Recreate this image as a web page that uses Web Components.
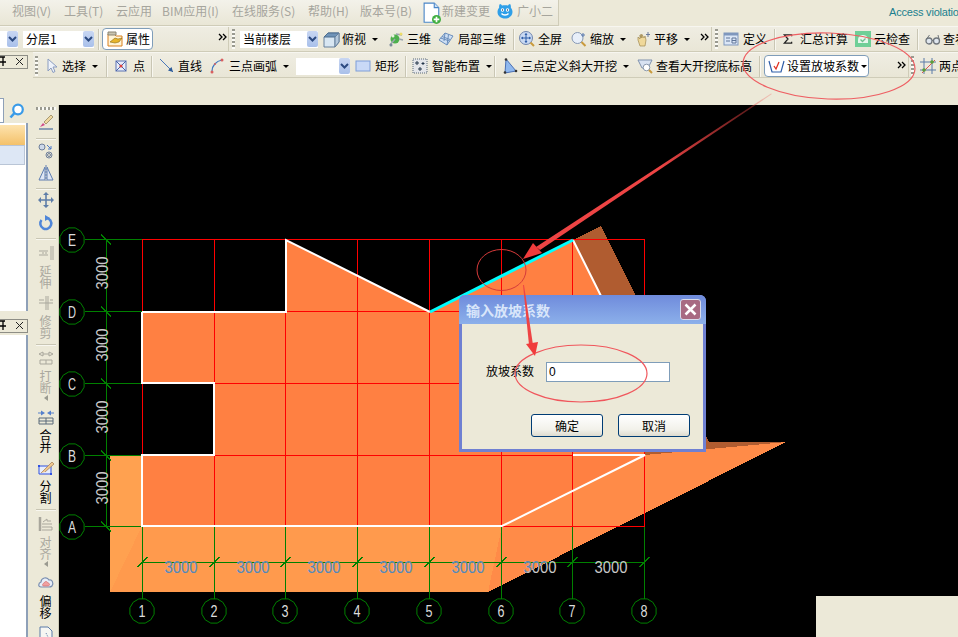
<!DOCTYPE html>
<html>
<head>
<meta charset="utf-8">
<style>
  html, body { margin: 0; height: 637px; overflow: hidden; background: #ece9d8; }
  body { font: 12px "Noto Sans CJK SC", "Liberation Sans", sans-serif; color: #000; }
</style>
</head>
<body>
<cad-app></cad-app>

<script>
const ICONS = {
  doc: '<path d="M2 1h9l4 4v13H2z" fill="#fff" stroke="#4a86c8"/><path d="M11 1v4h4" fill="#cfe2f6" stroke="#4a86c8"/><circle cx="13" cy="15.500" r="4" fill="#3fae3f"/><path d="M13 13v5M10.500 15.500h5" stroke="#fff" stroke-width="1.500"/>',
  mascot: '<path d="M3 1c1 0 1.500 1 2 1.500C6 2 10 2 11 2.500 11.500 2 12 1 13 1c1 1 1 3 .8 3.500C15 6 15.500 7.500 15.500 9c0 4-3.500 6.500-7.500 6.500S.5 13 .5 9C.5 7.500 1 6 2.200 4.500 2 4 2 2 3 1z" fill="#2f9fe8"/><circle cx="5.500" cy="7" r="1.700" fill="#fff"/><circle cx="10.500" cy="7" r="1.700" fill="#fff"/><circle cx="5.500" cy="7" r=".7" fill="#0a3a66"/><circle cx="10.500" cy="7" r=".7" fill="#0a3a66"/><path d="M4.500 10.500c1.500 2 5.500 2 7 0" fill="none" stroke="#fff" stroke-width="1.300"/>',
  prop: '<path d="M1 3h6l2 2h6v10H1z" fill="#fff3d6" stroke="#d9801e"/><path d="M1 1h8v3H1z" fill="#c9c4b0" stroke="#8a8472"/><path d="M3 11l5-4 3 1 4-1-3 4-4 1z" fill="#e7b52c" stroke="#8a6a10" stroke-width=".6"/>',
  cube: '<path d="M1 6l4-4h11v9l-4 5H1z" fill="#d8e6f2" stroke="#66809c"/><path d="M1 6l4-4h11l-4 4z" fill="#6f93b8" stroke="#4d6d8e"/><path d="M12 6v10" stroke="#66809c"/><path d="M12 6l4-4v9l-4 5z" fill="#b4c8dc" stroke="#66809c"/>',
  view3d: '<circle cx="7" cy="8" r="4.500" fill="#4db04d"/><path d="M2 14l5-6M8 3l6 1M11 8l4 1" stroke="#9aa5ae" stroke-width="1.500"/><circle cx="5" cy="5" r="1.500" fill="#e9f4e0"/><circle cx="13" cy="3" r="1.500" fill="#eedd66"/><circle cx="3" cy="14" r="1.500" fill="#7a8a9a"/>',
  local3d: '<path d="M1 9l6-7 8 3-6 9z" fill="#cfe0f4" stroke="#6a8ebc"/><path d="M4 5.500l8 3M7 2l-1 8M10.500 3.500L9 14M2.500 7l9 3" stroke="#6a8ebc" fill="none"/>',
  fit: '<circle cx="7" cy="7" r="6.500" fill="#c9d9f2" stroke="#7186ad"/><path d="M7 2.500v9M2.500 7h9" stroke="#2f5ea8"/><path d="M7 2L5.500 4h3zM7 12l-1.500-2h3zM2 7l2-1.500v3zM12 7l-2-1.500v3z" fill="#2f5ea8"/><path d="M11.500 11.500l3.500 3.500" stroke="#c99a3c" stroke-width="2"/>',
  zoom: '<circle cx="6.500" cy="7" r="5.500" fill="#e8eff9" stroke="#8698b4"/><path d="M10.500 11l4 4" stroke="#c99a3c" stroke-width="2"/><path d="M12 2v4M10 4h4" stroke="#5a7ab0"/>',
  pan: '<path d="M3 9V6l2 2V4l1 3V3l1 4V3.500L9 7l1-2 1 4-1 6H5z" fill="#efd89a" stroke="#a08a50" stroke-width=".7"/><path d="M13 1v5M11 3.500h4" stroke="#6a7a9a"/>',
  define: '<rect x="1" y="2" width="14" height="12" fill="#dbe6f6" stroke="#7f97bd"/><rect x="1" y="2" width="14" height="2.500" fill="#7f97bd"/><path d="M3 7h4M3 10h4M9 7h4v5H9zM9 9.500h4" stroke="#5f7598" fill="none"/>',
  sum: '<path d="M9 2.500V1H1l4 4.500L1 10h8V8.500" fill="none" stroke="#222" stroke-width="1.400"/>',
  cloud: '<rect x="0" y="0" width="16" height="16" fill="#6fcf97"/><path d="M3 9c0-4 3-5 5-5s5 1 5 5v3H3z" fill="#e6f6ec"/><path d="M5.500 8.500l2 2 3-3" fill="none" stroke="#6fbf8f" stroke-width="1.300"/>',
  glasses: '<circle cx="4" cy="10" r="3" fill="#dfe6ee" stroke="#70767c" stroke-width="1.300"/><circle cx="11.500" cy="10" r="3" fill="#dfe6ee" stroke="#70767c" stroke-width="1.300"/><path d="M7 9.500h1.500M1.500 8l3-4M14 8l-1-4" stroke="#70767c"/>',
  cursor: '<path d="M5 1v12l3-3 2 4.500 2-1L10 9h4z" fill="#eef2fa" stroke="#8a9cc0"/>',
  point: '<rect x="3" y="3" width="10" height="10" fill="#e8edf8" stroke="#5a72b4"/><path d="M3 3l10 10M13 3L3 13" stroke="#4a62a8"/><circle cx="8" cy="8" r="1.600" fill="#d84040"/>',
  line: '<path d="M1 1l13 13" stroke="#4a78b8"/><path d="M14 14l-5-1.500 3.500-3.500z" fill="#2a5a9a"/>',
  arc: '<path d="M3 13C3 8 7 3 13 2" fill="none" stroke="#3f78c0" stroke-width="1.200"/><circle cx="3" cy="14" r="1.500" fill="#d86060"/><circle cx="13" cy="2" r="1.500" fill="#d86060"/><circle cx="6" cy="6" r="1" fill="#d86060"/>',
  rect: '<rect x="1" y="3" width="14" height="10" fill="#c9d9f6" stroke="#7f9ed8"/>',
  smart: '<rect x="1" y="1" width="14" height="14" fill="#e4e6ea" stroke="#5a6a7a" stroke-dasharray="1 1"/><path d="M5 3v4M3 5h4M11 4v3M9.500 5.500h3M8 9v4M6 11h4" stroke="#24364a"/>',
  tri: '<path d="M4 1l10 12-11 2z" fill="#8fb8ee" stroke="#4a70b4"/><circle cx="4" cy="1.500" r="1.300" fill="#333"/><circle cx="3" cy="14.500" r="1.300" fill="#333"/><circle cx="14" cy="13" r="1.300" fill="#333"/>',
  viewbottom: '<path d="M1 2h14l-4 8H5z" fill="#d8e2f2" stroke="#7f91ad"/><circle cx="9.500" cy="9.500" r="3.300" fill="#fff" stroke="#8a98ac"/><path d="M12 12l3 3" stroke="#c99a3c" stroke-width="2"/>',
  slope: '<path d="M1 3l3 11h9l3-11" fill="none" stroke="#2f5ea8" stroke-width="1.200"/><path d="M6 8l2 3 3-7" fill="none" stroke="#e03020" stroke-width="1.300"/>',
  twopoint: '<path d="M4 0v16M12 0v16M0 4h16M0 12h16" stroke="#5a7aa8"/><path d="M2 15L15 2" stroke="#d85050"/><circle cx="4" cy="12" r="1.800" fill="#5aa03a"/><circle cx="12" cy="4" r="1.800" fill="#5aa03a"/>',
  search: '<circle cx="9" cy="6.500" r="4.800" fill="#fff" stroke="#3a9be8" stroke-width="2.200"/><path d="M5.500 10L1.500 14.500" stroke="#3a9be8" stroke-width="2.600"/>',
  brush: '<path d="M1 15h14" stroke="#6a84a8" stroke-width="1.500"/><path d="M2 13l3-4 2 2z" fill="#d04a8a"/><path d="M6 8l7-7 2 2-7 7z" fill="#f0d9a0" stroke="#8a7a50" stroke-width=".7"/>',
  copyring: '<circle cx="4" cy="4" r="3" fill="#ced9ea" stroke="#6f7f99"/><circle cx="11" cy="12" r="3" fill="none" stroke="#6f7f99"/><circle cx="11" cy="12" r="1.500" fill="none" stroke="#6f7f99"/><path d="M9 2l4 4M13 3v3h-3" stroke="#4a78c8" fill="none"/>',
  mirror: '<path d="M7 2v13H1zM9 2v13h6z" fill="#dfe7f4" stroke="#5e7db0"/><path d="M8 0v16" stroke="#5e7db0" stroke-dasharray="2 1"/>',
  move: '<path d="M8 1v14M1 8h14" stroke="#5f7ea8" stroke-width="1.600"/><path d="M8 0l-3 3h6zM8 16l-3-3h6zM0 8l3-3v6zM16 8l-3-3v6z" fill="#5f7ea8"/>',
  rotate: '<path d="M3.500 5a5.500 5.500 0 1 0 5-2" fill="none" stroke="#4f86d8" stroke-width="2.500"/><path d="M7 0l5 3-5 3z" fill="#4f86d8"/>',
  extend: '<path d="M1 6h9M1 10h9M13 1v14M15 1v14" stroke="#a9a79c"/><path d="M9 8H4" stroke="#a9a79c" stroke-dasharray="2 1"/>',
  trim: '<path d="M8 1v14M10 1v14M1 8h14M1 5h5M12 5h3" stroke="#a9a79c"/>',
  breakline: '<path d="M1 4l4-2v4zM15 4l-4-2v4zM2 10h12v4H2zM8 10v4" fill="none" stroke="#a9a79c"/><path d="M5 4h6" stroke="#a9a79c"/>',
  merge: '<path d="M0 4h5M16 4h-5" stroke="#5580cc"/><path d="M7 4L3 1.500v5zM9 4l4-2.500v5z" fill="#5580cc"/><path d="M1 9h14v6H1zM8 9v6M1 12h14" fill="none" stroke="#5a6a7a"/>',
  split: '<path d="M1 6h12v8H1z" fill="#e8eefc" stroke="#2f50e0"/><path d="M3 13L14 2l2 2-9 8" fill="#f0c890" stroke="#a07a50" stroke-width=".7"/><rect x="0" y="5" width="2" height="2" fill="#2f50e0"/><rect x="12" y="13" width="2" height="2" fill="#2f50e0"/>',
  align: '<path d="M2 1v14" stroke="#a9a79c" stroke-width="2.500"/><path d="M4 8h10M4 14h10v-3H4" fill="none" stroke="#a9a79c"/><path d="M5 6l4-3v2h4" fill="none" stroke="#a9a79c"/>',
  offset: '<path d="M3 12c-3 0-3-4 0-5 0-4 6-6 8-2 3-1 5 3 3 6-1 1-2 1-3 1z" fill="#e8eef8" stroke="#7a8fb0" stroke-width="1.200"/><path d="M6 11c-2 0-2-2 0-3 1-2 3-2 4 0 2 0 2 3 0 3z" fill="#f0a0a0" stroke="#d06060" stroke-width=".6"/>',
  page: '<path d="M2 1h8l4 4v11H2z" fill="#f6f6f2" stroke="#5a7aa8"/><path d="M8 7l3 6M6 13h2" stroke="#5a7aa8" stroke-dasharray="1 1"/>'
};

class UiIcon extends HTMLElement {
  connectedCallback() {
    const root = this.shadowRoot || this.attachShadow({ mode: 'open' });
    const size = this.getAttribute('size') || 16;
    const box = this.getAttribute('box') || '0 0 16 16';
    root.innerHTML = `
      <style>
        :host { display: block; flex: none; width: ${size}px; height: ${size}px; }
        svg { display: block; overflow: visible; }
      </style>
      <svg width="${size}" height="${size}" viewBox="${box}">${ICONS[this.getAttribute('name')] || ''}</svg>`;
  }
}
customElements.define('ui-icon', UiIcon);

class ToolItem extends HTMLElement {
  constructor() {
    super();
    const gap = this.getAttribute('gap') || 3;
    const size = this.getAttribute('size') || 16;
    const box = this.getAttribute('box') || '0 0 16 16';
    const drop = this.hasAttribute('drop') ? '<span class="drop"></span>' : '';
    this.attachShadow({ mode: 'open' }).innerHTML = `
      <style>
        :host { display: flex; flex: none; align-items: center; height: 100%; white-space: nowrap; line-height: 14px; }
        ui-icon { margin-right: ${gap}px; }
        .drop { margin-left: 6px; border: 3px solid transparent; border-top: 3px solid #000; border-bottom: 0; width: 0; height: 0; }
      </style>
      <ui-icon name="${this.getAttribute('icon')}" size="${size}" box="${box}"></ui-icon><slot></slot>${drop}`;
  }
}
customElements.define('tool-item', ToolItem);

class ToolSep extends HTMLElement {
  constructor() {
    super();
    this.attachShadow({ mode: 'open' }).innerHTML = `
      <style>:host { display: block; flex: none; width: 1px; height: 21px; background: #c9c6b4; box-shadow: 1px 0 0 #f8f7f0; }</style>`;
  }
}
customElements.define('tool-sep', ToolSep);

class ToolGrip extends HTMLElement {
  constructor() {
    super();
    this.attachShadow({ mode: 'open' }).innerHTML = `
      <style>
        :host { display: block; flex: none; width: 3px; height: 20px; margin: 0 5px 0 3px;
          background: repeating-linear-gradient(#9a9a90 0 2px, #fbfbf6 2px 4px); }
      </style>`;
  }
}
customElements.define('tool-grip', ToolGrip);

class ToolMore extends HTMLElement {
  constructor() {
    super();
    this.attachShadow({ mode: 'open' }).innerHTML = `
      <style>
        :host { display: block; flex: none; width: 9px; height: 8px; align-self: flex-start; margin-top: 6px; }
        svg { display: block; }
      </style>
      <svg width="9" height="8" viewBox="0 0 9 8"><path d="M1 1l3 3-3 3M5 1l3 3-3 3" fill="none" stroke="#000" stroke-width="1.300"/></svg>`;
  }
}
customElements.define('tool-more', ToolMore);

class UiCombo extends HTMLElement {
  constructor() {
    super();
    this.attachShadow({ mode: 'open' }).innerHTML = `
      <style>
        :host { display: flex; flex: none; align-items: center; justify-content: space-between; height: 17px; background: #fff; padding-left: 3px; box-sizing: border-box; line-height: 14px; }
        .arrow { flex: none; width: 11px; height: 16px; border-radius: 2px; background: linear-gradient(#c8d6f2, #a9c0ea); display: flex; align-items: center; justify-content: center; }
        svg { display: block; }
      </style>
      <span><slot></slot></span>
      <span class="arrow"><svg width="9" height="6" viewBox="0 0 9 6"><path d="M1 1l3.500 3.500L8 1" fill="none" stroke="#2c4a80" stroke-width="2"/></svg></span>`;
  }
}
customElements.define('ui-combo', UiCombo);

class ToolGroup extends HTMLElement {
  constructor() {
    super();
    this.attachShadow({ mode: 'open' }).innerHTML = `
      <style>
        :host { display: flex; flex: none; align-items: center; height: 100%; box-sizing: border-box; overflow: hidden; }
      </style>
      <slot></slot>`;
  }
}
customElements.define('tool-group', ToolGroup);

class MenuBar extends HTMLElement {
  constructor() {
    super();
    this.attachShadow({ mode: 'open' }).innerHTML = `
      <style>
        :host { display: flex; height: 26px; background: #ece9d8; overflow: hidden; }
        .menus { display: flex; align-items: center; width: 559px; padding: 0 0 4px 12px; box-sizing: border-box; flex: none;
          background: linear-gradient(#f3f2ea, #e9e6d6); border-right: 1px solid #cfccb8; border-bottom: 1px solid #cfccb8; color: #a6a59d; }
        .msg { margin: 0 0 3px 330px; flex: none; align-self: center; color: #1b7f8e; font: 11px "Liberation Sans", sans-serif; letter-spacing: -0.2px; white-space: nowrap; }
      </style>
      <div class="menus"><slot></slot></div>
      <div class="msg"><slot name="msg"></slot></div>`;
  }
}
customElements.define('menu-bar', MenuBar);

class MenuItem extends HTMLElement {
  constructor() {
    super();
    this.attachShadow({ mode: 'open' }).innerHTML = `
      <style>:host { display: flex; flex: none; align-items: center; height: 100%; white-space: nowrap; line-height: 14px; }</style>
      <slot></slot>`;
  }
}
customElements.define('menu-item', MenuItem);

class ToolRow extends HTMLElement {
  constructor() {
    super();
    this.attachShadow({ mode: 'open' }).innerHTML = `
      <style>
        :host { display: block; height: 26px; box-sizing: border-box; background: linear-gradient(#efede2, #e9e6d6);
          border-top: 1px solid #f7f6f0; border-bottom: 1px solid #cfccb8; overflow: hidden; }
        div { display: flex; height: 100%; box-sizing: border-box; }
        :host([low]) div { padding-top: 2px; }
      </style>
      <div><slot></slot></div>`;
  }
}
customElements.define('tool-row', ToolRow);

class ActiveButton extends HTMLElement {
  constructor() {
    super();
    this.attachShadow({ mode: 'open' }).innerHTML = `
      <style>
        :host { display: flex; flex: none; align-items: center; box-sizing: border-box; height: 22px; background: #fff;
          border: 1px solid #7f9db9; border-radius: 4px; line-height: 14px; white-space: nowrap; }
      </style>
      <slot></slot>`;
  }
}
customElements.define('active-button', ActiveButton);

class DockTitle extends HTMLElement {
  constructor() {
    super();
    this.attachShadow({ mode: 'open' }).innerHTML = `
      <style>
        :host { display: block; box-sizing: border-box; height: 14px; border: 1px solid #8e8e86; border-left: 0; background: #ece9d8; overflow: hidden; }
        svg { display: block; }
      </style>
      <svg width="27" height="12" viewBox="0 0 27 12">
        <path d="M0 1h5M3 1v5M0 6h6M3 6v4" stroke="#000" stroke-width="1.300" fill="none"/>
        <path d="M16 2l7 7M23 2l-7 7" stroke="#222" fill="none"/>
      </svg>`;
  }
}
customElements.define('dock-title', DockTitle);

class DockColumn extends HTMLElement {
  constructor() {
    super();
    this.attachShadow({ mode: 'open' }).innerHTML = `
      <style>
        :host { display: flex; flex-direction: column; flex: none; width: 28px; height: 585px; padding-top: 3px; box-sizing: border-box; }
        .search { display: flex; align-items: center; gap: 5px; height: 25px; margin-top: 29px; }
        .box { width: 4px; height: 25px; background: #fff; border: 1px solid #8ea0b8; border-left: 0; box-sizing: border-box; }
        .list { height: 188px; background: #fff; box-sizing: border-box; border-right: 2px solid #8ea0b8; padding: 2px 1px 0 0; }
        .sel { height: 20px; background: linear-gradient(#fde3ae, #f3c16a); }
        .alt { height: 20px; background: #dde7f5; border: 1px solid #b9c5d6; border-left: 0; box-sizing: border-box; }
        dock-title.second { margin-top: 8px; }
        .lower { flex: 1; margin-top: 2px; background: #fff; border-right: 2px solid #8ea0b8; }
      </style>
      <dock-title></dock-title>
      <div class="search"><div class="box"></div><ui-icon name="search"></ui-icon></div>
      <div class="list"><div class="sel"></div><div class="alt"></div></div>
      <dock-title class="second"></dock-title>
      <div class="lower"></div>`;
  }
}
customElements.define('dock-column', DockColumn);

class SideTool extends HTMLElement {
  constructor() {
    super();
    const drop = this.hasAttribute('drop') ? '<span class="drop"></span>' : '';
    this.attachShadow({ mode: 'open' }).innerHTML = `
      <style>
        :host { display: flex; flex-direction: column; align-items: center; flex: none; }
        .label { width: 12px; margin-top: 4px; line-height: 12px; font-size: 12px; word-break: break-all; color: inherit; }
        .drop { margin-top: 1px; border: 3px solid transparent; border-right: 4px solid #9a9a90; border-left: 0; width: 0; height: 0; }
      </style>
      <ui-icon name="${this.getAttribute('icon')}"></ui-icon>
      ${this.textContent.trim() ? '<div class="label"><slot></slot></div>' : ''}${drop}`;
  }
}
customElements.define('side-tool', SideTool);

class SideSep extends HTMLElement {
  constructor() {
    super();
    this.attachShadow({ mode: 'open' }).innerHTML = `
      <style>:host { display: block; flex: none; width: 20px; height: 1px; background: #c9c6b4; box-shadow: 0 1px 0 #f8f7f0; }</style>`;
  }
}
customElements.define('side-sep', SideSep);

class SideToolbar extends HTMLElement {
  constructor() {
    super();
    this.attachShadow({ mode: 'open' }).innerHTML = `
      <style>
        :host { display: flex; flex-direction: column; align-items: center; flex: none; width: 26px; height: 532px; box-sizing: border-box; overflow: hidden;
          background: #ece9d8; border-right: 1px solid #cfccb8; }
        .grip { flex: none; width: 20px; height: 3px; margin: 2px 0 4px; background: repeating-linear-gradient(90deg, #9a9a90 0 2px, #fbfbf6 2px 4px); }
      </style>
      <div class="grip"></div>
      <slot></slot>`;
  }
}
customElements.define('side-toolbar', SideToolbar);

class CadCanvas extends HTMLElement {
  constructor() {
    super();
    const xs = [142.5, 214.5, 285.5, 357.5, 429.5, 501.5, 572.5, 644.5];
    const ys = [239.5, 311.5, 383.5, 455.5, 526.5];
    const rows = ['E', 'D', 'C', 'B', 'A'];
    const slopeAll = '110,455 645,455 786,442 488,592 110,592';

    const bubble = (cx, cy, label) => {
      let pts = '';
      for (let i = 0; i < 12; i++) {
        const a = (i + 0.5) * Math.PI / 6;
        pts += `${(cx + 12.5 * Math.cos(a)).toFixed(1)},${(cy + 12.5 * Math.sin(a)).toFixed(1)} `;
      }
      return `<polygon points="${pts}" fill="none" stroke="#008000"/>
        <text x="${cx}" y="${cy + 6}" text-anchor="middle" textLength="${/[A-E]/.test(label) ? 8 : 7}" lengthAdjust="spacingAndGlyphs" class="num">${label}</text>`;
    };

    let green = '', red = '', bubbles = '', dims = '';
    xs.forEach((x, i) => {
      green += `M${x} 527V599 M${x - 5} 567L${x + 5} 557 `;
      red += `M${x} 239V527 `;
      bubbles += bubble(Math.floor(x), 611, String(i + 1));
    });
    ys.forEach((y, i) => {
      green += `M85 ${y}H142 M101 ${y - 5}L111 ${y + 5} `;
      red += i === 4 ? `M501 ${y}H645 ` : `M142 ${y}H645 `;
      bubbles += bubble(72, Math.floor(y) + 1, rows[i]);
    });
    green += 'M106.500 240V527 M142 562.500H645';

    [273, 345, 417, 488].forEach(c => {
      dims += `<text transform="translate(108 ${c}) rotate(-90)" text-anchor="middle" textLength="33" lengthAdjust="spacingAndGlyphs" class="dim">3000</text>`;
    });
    [181, 253, 324, 396, 468, 540, 611].forEach(c => {
      dims += `<text x="${c}" y="573" text-anchor="middle" textLength="33" lengthAdjust="spacingAndGlyphs" class="dim">3000</text>`;
      dims += `<text x="${c}" y="573" text-anchor="middle" textLength="33" lengthAdjust="spacingAndGlyphs" class="dim on" clip-path="url(#onslope)">3000</text>`;
    });

    this.attachShadow({ mode: 'open' }).innerHTML = `
      <style>
        :host { display: block; flex: none; width: 899px; height: 532px; background: #000; overflow: hidden; }
        svg { display: block; }
        .fill { shape-rendering: crispEdges; }
        .line { fill: none; shape-rendering: crispEdges; }
        .num { font: 16px "Liberation Sans", sans-serif; fill: #dcdcdc; }
        .dim { font: 17px "Liberation Sans", sans-serif; fill: #c8c8c8; }
        .dim.on { fill: #5b82ab; }
      </style>
      <svg width="899" height="532" viewBox="59 105 899 532">
        <defs><clipPath id="onslope"><polygon points="${slopeAll}"/></clipPath></defs>
        <polygon class="fill" points="573,240 601,226 709,442 786,442 645,455" fill="#b05c30"/>
        <polygon class="fill" points="110,455 142,455 142,526 110,592" fill="#ffa150"/>
        <polygon class="fill" points="142,526 502,526 488,592 110,592" fill="#ff9a4d"/>
        <polygon class="fill" points="502,526 645,455 786,442 488,592" fill="#ff8b48"/>
        <polygon class="fill" points="142,312 286,312 286,240 430,312 573,240 645,384 645,455 502,526 142,526 142,455 214,455 214,383 142,383" fill="#ff8042"/>
        <path class="line" d="${green}" stroke="#008000"/>
        <path class="line" d="${red}" stroke="#ff0000"/>
        <path d="M142 312H286V240L430 312M573 240L601 296M142 312V383H214V455H142V526H502L645 455H573" fill="none" stroke="#fff" stroke-width="2"/>
        <path d="M430 312L573 240" fill="none" stroke="#00ffff" stroke-width="3"/>
        ${bubbles}
        ${dims}
      </svg>`;
  }
}
customElements.define('cad-canvas', CadCanvas);

class SlopeDialog extends HTMLElement {
  constructor() {
    super();
    this.attachShadow({ mode: 'open' }).innerHTML = `
      <style>
        :host { position: absolute; left: 459px; top: 295px; width: 247px; height: 157px; box-sizing: border-box; display: flex; flex-direction: column;
          border: 3px solid #6f80d2; border-top: 0; border-radius: 6px 6px 0 0; background: #ece9d8; font-size: 12px; }
        .title { display: flex; align-items: center; justify-content: space-between; height: 29px; margin: 0 -3px; padding: 0 5px 0 7px; flex: none;
          background: linear-gradient(#6f8bdc, #8cb0ea); border-radius: 6px 6px 0 0; color: #d9e6fa; font-weight: bold; font-size: 14px; }
        .close { width: 21px; height: 21px; box-sizing: border-box; border: 1px solid #d8dcec; border-radius: 3px; background: #a86a82; display: flex; align-items: center; justify-content: center; }
        svg { display: block; }
        .row { display: flex; align-items: center; margin: 38px 0 0 24px; height: 20px; }
        .label { margin-bottom: 3px; }
        .field { width: 124px; height: 20px; margin-left: 12px; box-sizing: border-box; border: 1px solid #7f9db9; background: #fff; padding-left: 2px; font: 12px/18px "Liberation Sans", sans-serif; }
        .btns { display: flex; gap: 15px; margin: 32px 0 0 69px; }
        button { width: 72px; height: 23px; padding: 0; font: inherit; color: #000; border: 1px solid #003c74; border-radius: 3px; background: linear-gradient(#fff, #f2f1ea 70%, #dedbcf); }
      </style>
      <div class="title"><span>输入放坡系数</span>
        <span class="close"><svg width="13" height="13" viewBox="0 0 13 13"><path d="M1.500 1.500l10 10M11.500 1.500l-10 10" stroke="#fff" stroke-width="2.500"/></svg></span>
      </div>
      <div class="row"><span class="label">放坡系数</span><div class="field">0</div></div>
      <div class="btns"><button>确定</button><button>取消</button></div>`;
  }
}
customElements.define('slope-dialog', SlopeDialog);

class MarkupLayer extends HTMLElement {
  constructor() {
    super();
    this.attachShadow({ mode: 'open' }).innerHTML = `
      <style>
        :host { position: absolute; left: 0; top: 0; width: 958px; height: 637px; pointer-events: none; }
        svg { display: block; }
      </style>
      <svg width="958" height="637" viewBox="0 0 958 637">
        <defs>
          <linearGradient id="fade" gradientUnits="userSpaceOnUse" x1="772" y1="94" x2="660" y2="168">
            <stop offset="0" stop-color="#ee4444" stop-opacity=".25"/>
            <stop offset="1" stop-color="#ee4444"/>
          </linearGradient>
        </defs>
        <ellipse cx="829" cy="66" rx="86" ry="33" transform="rotate(2 829 66)" fill="none" stroke="#ee5f63" stroke-width="1.200"/>
        <ellipse cx="501.500" cy="270" rx="24.500" ry="20.500" fill="none" stroke="#d63a3a"/>
        <ellipse cx="581" cy="373.500" rx="66" ry="28.500" fill="none" stroke="#f0565c" stroke-width="1.200"/>
        <polygon points="772,94 771,93.500 536,247 540,250" fill="url(#fade)"/>
        <polygon points="523,259 533,243 542,253" fill="#f03c3c"/>
        <polygon points="523,285 524,285 533,345 529,345" fill="#ee4444"/>
        <polygon points="535,356 526,344 538,342" fill="#f03c3c"/>
      </svg>`;
  }
}
customElements.define('markup-layer', MarkupLayer);

class CadApp extends HTMLElement {
  constructor() {
    super();
    this.attachShadow({ mode: 'open' }).innerHTML = `
      <style>
        :host { display: block; position: relative; width: 958px; height: 637px; overflow: hidden; background: #ece9d8; }
        .body { display: flex; gap: 5px; }
        .main { width: 925px; }
        .spacer { height: 27px; }
        .work { display: flex; }
        .sb { position: absolute; right: 0; bottom: 0; width: 142px; height: 41px; background: #ece9d8; }
      </style>
      <menu-bar>
        <menu-item style="width:52px">视图(V)</menu-item>
        <menu-item style="width:52px">工具(T)</menu-item>
        <menu-item style="width:46px">云应用</menu-item>
        <menu-item style="width:70px">BIM应用(I)</menu-item>
        <menu-item style="width:76px">在线服务(S)</menu-item>
        <menu-item style="width:52px">帮助(H)</menu-item>
        <menu-item style="width:63px">版本号(B)</menu-item>
        <tool-item icon="doc" size="18" box="1 0 16 16" gap="1" style="width:74px">新建变更</tool-item>
        <tool-item icon="mascot" gap="4">广小二</tool-item>
        <span slot="msg">Access violation</span>
      </menu-bar>

      <tool-row>
        <tool-group style="width:229px; border-right:1px solid #cfccb8">
          <ui-combo style="width:18px; margin-right:5px"></ui-combo>
          <ui-combo style="width:71px; margin-right:4px">分层1</ui-combo>
          <tool-sep style="margin-right:3px"></tool-sep>
          <active-button style="width:51px; padding-left:4px"><ui-icon name="prop" style="margin-right:3px"></ui-icon>属性</active-button>
          <tool-more style="margin-left:65px"></tool-more>
        </tool-group>
        <tool-group style="width:483px; border-right:1px solid #cfccb8">
          <tool-grip></tool-grip>
          <ui-combo style="width:78px; margin-right:5px">当前楼层</ui-combo>
          <tool-item icon="cube" drop style="width:65px">俯视</tool-item>
          <tool-item icon="view3d" style="width:50px">三维</tool-item>
          <tool-item icon="local3d" gap="4" style="width:75px">局部三维</tool-item>
          <tool-sep style="margin-right:5px"></tool-sep>
          <tool-item icon="fit" style="width:52px">全屏</tool-item>
          <tool-item icon="zoom" drop style="width:64px">缩放</tool-item>
          <tool-item icon="pan" drop style="width:61px">平移</tool-item>
          <tool-more style="margin-left:4px"></tool-more>
        </tool-group>
        <tool-group style="width:246px">
          <tool-grip></tool-grip>
          <tool-item icon="define" gap="4" style="width:51px">定义</tool-item>
          <tool-sep style="margin-right:8px"></tool-sep>
          <ui-icon name="sum" size="10" box="0 0 10 11" style="margin-right:7px"></ui-icon>
          <menu-item style="width:55px">汇总计算</menu-item>
          <tool-item icon="cloud" style="width:62px">云检查</tool-item>
          <tool-sep style="margin-right:7px"></tool-sep>
          <tool-item icon="glasses" gap="2">查看</tool-item>
        </tool-group>
      </tool-row>

      <div class="body">
        <dock-column></dock-column>
        <div class="main">
          <tool-row low>
            <tool-group style="width:876px; border-right:1px solid #cfccb8">
              <tool-grip style="margin:0 6px 0 2px"></tool-grip>
              <tool-item icon="cursor" drop style="width:62px; margin-left:-1px; margin-right:1px">选择</tool-item>
              <tool-sep style="margin-right:6px"></tool-sep>
              <tool-item icon="point" gap="4" style="width:38px">点</tool-item>
              <tool-sep style="margin-right:7px"></tool-sep>
              <tool-item icon="line" style="width:50px">直线</tool-item>
              <tool-item icon="arc" gap="4" drop style="width:87px">三点画弧</tool-item>
              <ui-combo style="width:54px; margin-right:5px"></ui-combo>
              <tool-item icon="rect" gap="4" style="width:50px">矩形</tool-item>
              <tool-sep style="margin-right:6px"></tool-sep>
              <tool-item icon="smart" gap="4" drop style="width:82px">智能布置</tool-item>
              <tool-sep style="margin-right:7px"></tool-sep>
              <tool-item icon="tri" drop style="width:135px">三点定义斜大开挖</tool-item>
              <tool-item icon="viewbottom" style="width:122px">查看大开挖底标高</tool-item>
              <tool-sep style="margin-right:4px"></tool-sep>
              <active-button style="width:105px; padding-left:3px">
                <ui-icon name="slope" style="margin-right:3px"></ui-icon>设置放坡系数<span style="margin-left:2px; border:3px solid transparent; border-top-color:#000; border-bottom:0"></span>
              </active-button>
              <tool-more style="margin-left:28px"></tool-more>
            </tool-group>
            <tool-group style="width:49px">
              <tool-grip style="margin:0 6px 0 2px"></tool-grip>
              <tool-item icon="twopoint">两点</tool-item>
            </tool-group>
          </tool-row>
          <div class="spacer"></div>
          <div class="work">
            <side-toolbar>
              <side-tool icon="brush"></side-tool>
              <side-sep style="margin-top:8px"></side-sep>
              <side-tool icon="copyring" style="margin-top:4px"></side-tool>
              <side-tool icon="mirror" style="margin-top:6px"></side-tool>
              <side-sep style="margin-top:7px"></side-sep>
              <side-tool icon="move" style="margin-top:3px"></side-tool>
              <side-tool icon="rotate" style="margin-top:7px"></side-tool>
              <side-sep style="margin-top:7px"></side-sep>
              <side-tool icon="extend" style="margin-top:6px; color:#aaa89e">延伸</side-tool>
              <side-tool icon="trim" style="margin-top:6px; color:#aaa89e">修剪</side-tool>
              <side-sep style="margin-top:5px"></side-sep>
              <side-tool icon="breakline" style="margin-top:5px; color:#aaa89e" drop>打断</side-tool>
              <side-tool icon="merge" style="margin-top:8px">合并</side-tool>
              <side-tool icon="split" style="margin-top:7px">分割</side-tool>
              <side-sep style="margin-top:5px"></side-sep>
              <side-tool icon="align" style="margin-top:6px; color:#aaa89e" drop>对齐</side-tool>
              <side-tool icon="offset" style="margin-top:8px">偏移</side-tool>
              <side-tool icon="page" style="margin-top:7px"></side-tool>
            </side-toolbar>
            <cad-canvas></cad-canvas>
          </div>
        </div>
      </div>
      <div class="sb"></div>
      <slope-dialog></slope-dialog>
      <markup-layer></markup-layer>`;
  }
}
customElements.define('cad-app', CadApp);
</script>
</body>
</html>
